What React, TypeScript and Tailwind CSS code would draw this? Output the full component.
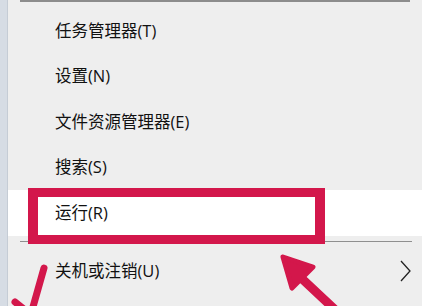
export default function App() {
  const rows = ["任务管理器(T)", "设置(N)", "文件资源管理器(E)", "搜索(S)"];

  return (
    <div
      className="relative flex h-[306px] w-[422px] overflow-hidden bg-[#eeeeee] text-[16.5px] text-[#111111]"
      style={{ fontFamily: '"Open Sans", "Noto Sans CJK SC", sans-serif' }}
    >
      <div className="w-[8px] shrink-0 border-r border-[#c5ccd5] bg-[#d6dce4]" />

      <div className="flex flex-1 flex-col">
        <div className="ml-[12px] mr-[12px] h-[2px] bg-[#8c8c8c]" />
        <div className="h-[6px]" />

        {rows.map((label) => (
          <div key={label} className="flex h-[45.5px] items-center pl-[47px] leading-none">
            {label}
          </div>
        ))}

        <div className="flex h-[45.5px] items-center bg-white pl-[47px] leading-none">
          运行(R)
        </div>

        <div className="ml-[12px] mr-[10px] mt-[5px] mb-[7px] h-px bg-[#8f8f8f]" />

        <div className="flex h-[45.5px] items-center justify-between pl-[47px] pr-[11px] leading-none">
          <span>关机或注销(U)</span>
          <svg width="11" height="22" viewBox="0 0 11 22">
            <path d="M1 1 L10 11 L1 21" fill="none" stroke="#222" strokeWidth="1.3" />
          </svg>
        </div>
      </div>

      {/* red highlight box */}
      <div className="absolute left-[28px] top-[188px] h-[56px] w-[297px] border-[9px] border-x-[10px] border-[#d3174b]" />

      {/* hand drawn marks */}
      <svg className="absolute inset-0" width="422" height="306" viewBox="0 0 422 306">
        <g stroke="#d3174b" strokeLinecap="round" strokeLinejoin="round" fill="none">
          <path d="M44 268 L31 314" strokeWidth="7" />
          <path d="M15 302 L30 314" strokeWidth="7" />
          <path d="M298 275 L346 320" strokeWidth="9" />
        </g>
        <polygon
          points="283,257 313,267 292,288"
          fill="#d3174b"
          stroke="#d3174b"
          strokeWidth="5"
          strokeLinejoin="round"
        />
      </svg>
    </div>
  );
}
